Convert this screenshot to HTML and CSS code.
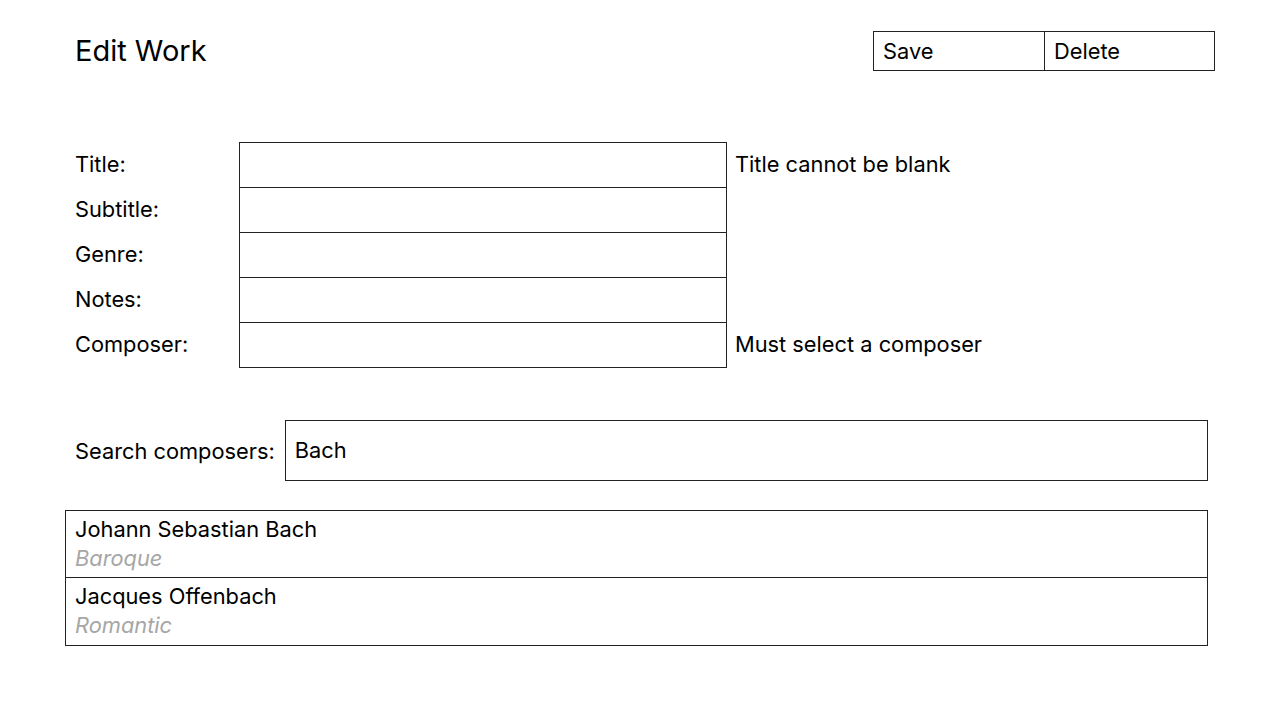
FILE: index.html
```html
<!DOCTYPE html>
<html lang="en">
<head>
<meta charset="utf-8">
<title>Edit Work</title>
<link rel="stylesheet" href="styles.css">
</head>
<body>
<div class="page">
  <header class="header">
    <h1 class="title">Edit Work</h1>
    <div class="actions">
      <button class="btn">Save</button>
      <button class="btn">Delete</button>
    </div>
  </header>

  <form class="form">
    <label class="label">Title:</label>
    <div class="field"></div>
    <div class="error">Title cannot be blank</div>

    <label class="label">Subtitle:</label>
    <div class="field"></div>
    <div class="error"></div>

    <label class="label">Genre:</label>
    <div class="field"></div>
    <div class="error"></div>

    <label class="label">Notes:</label>
    <div class="field"></div>
    <div class="error"></div>

    <label class="label">Composer:</label>
    <div class="field field-last"></div>
    <div class="error">Must select a composer</div>
  </form>

  <div class="search">
    <label class="search-label">Search composers:</label>
    <div class="search-input">Bach</div>
  </div>

  <ul class="results">
    <li class="result">
      <div class="name">Johann Sebastian Bach</div>
      <div class="era">Baroque</div>
    </li>
    <li class="result">
      <div class="name">Jacques Offenbach</div>
      <div class="era">Romantic</div>
    </li>
  </ul>
</div>
</body>
</html>
```

FILE: styles.css
```css
* { box-sizing: border-box; }

html, body {
  margin: 0;
  padding: 0;
  background: #ffffff;
}

body {
  font-family: "Inter", "Liberation Sans", sans-serif;
  font-size: 21.8px;
  color: #000000;
}

.page {
  width: 1280px;
  height: 720px;
  padding-top: 31px;
}

.header {
  display: flex;
  align-items: center;
  justify-content: space-between;
  margin-left: 75px;
  width: 1140px;
  height: 40px;
}

.title {
  margin: 0;
  font-size: 29px;
  font-weight: 400;
  line-height: 40px;
}

.actions {
  display: flex;
  border: 1px solid #222;
}

.btn {
  width: 170px;
  height: 38px;
  padding: 0 9px;
  border: none;
  background: #fff;
  font: inherit;
  color: inherit;
  text-align: left;
}

.btn + .btn {
  border-left: 1px solid #222;
}

.form {
  display: grid;
  grid-template-columns: 164px 488px auto;
  grid-auto-rows: 45px;
  margin: 71px 0 0 75px;
}

.label,
.error {
  display: flex;
  align-items: center;
  padding-bottom: 1px;
}

.error {
  padding-left: 8px;
}

.field {
  border: 1px solid #222;
  border-bottom: none;
}

.field-last {
  height: 46px;
  border-bottom: 1px solid #222;
}

.search {
  display: flex;
  align-items: center;
  gap: 10px;
  margin: 53px 0 0 75px;
}

.search-input {
  width: 923px;
  height: 61px;
  border: 1px solid #222;
  padding: 0 9px 1px;
  display: flex;
  align-items: center;
}

.results {
  list-style: none;
  margin: 29px 0 0 65px;
  padding: 0;
  width: 1143px;
  border: 1px solid #222;
}

.result {
  height: 66px;
  padding: 5px 9px 0;
}

.result + .result {
  height: 68px;
  border-top: 1px solid #222;
}

.name {
  line-height: 27px;
}

.era {
  line-height: 30px;
  font-style: italic;
  color: #a6a6a6;
}
```
